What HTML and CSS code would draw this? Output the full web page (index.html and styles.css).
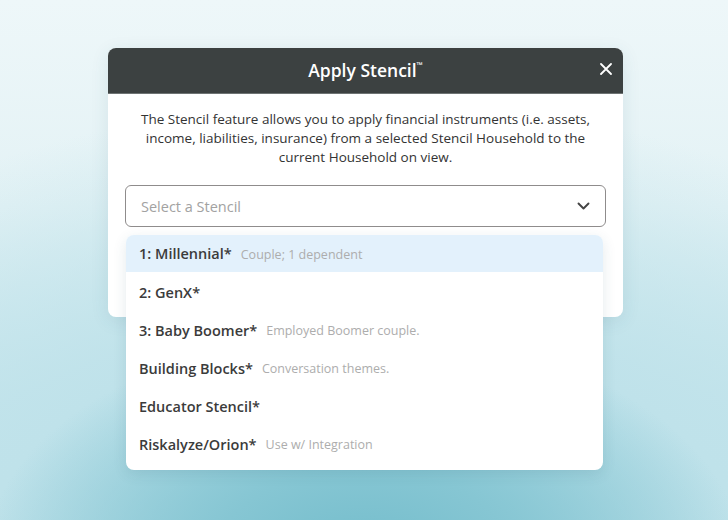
FILE: index.html
```html
<!DOCTYPE html>
<html>
<head>
<meta charset="utf-8">
<link rel="stylesheet" href="styles.css">
</head>
<body>
<div class="stage">
  <div class="modal">
    <div class="modal-header">
      <h1 class="title">Apply Stencil<sup class="tm">™</sup></h1>
      <button class="close" aria-label="Close">
        <svg width="12" height="12" viewBox="0 0 12 12"><path d="M1 1 L11 11 M11 1 L1 11" stroke="#fff" stroke-width="1.8" stroke-linecap="round"/></svg>
      </button>
    </div>
    <div class="modal-body">
      <p class="desc">The Stencil feature allows you to apply financial instruments (i.e. assets, income, liabilities, insurance) from a selected Stencil Household to the current Household on view.</p>
      <div class="select-wrap">
        <div class="select">
          <span class="placeholder">Select a Stencil</span>
          <svg class="chev" width="13" height="8" viewBox="0 0 13 8"><path d="M1.5 1.5 L6.5 6.5 L11.5 1.5" fill="none" stroke="#444" stroke-width="1.9" stroke-linecap="round" stroke-linejoin="round"/></svg>
        </div>
        <ul class="menu">
          <li class="item active"><span class="name">1: Millennial*</span><span class="note">Couple; 1 dependent</span></li>
          <li class="item"><span class="name">2: GenX*</span></li>
          <li class="item"><span class="name">3: Baby Boomer*</span><span class="note">Employed Boomer couple.</span></li>
          <li class="item"><span class="name">Building Blocks*</span><span class="note">Conversation themes.</span></li>
          <li class="item"><span class="name">Educator Stencil*</span></li>
          <li class="item"><span class="name">Riskalyze/Orion*</span><span class="note">Use w/ Integration</span></li>
        </ul>
      </div>
    </div>
  </div>
</div>
</body>
</html>
```

FILE: styles.css
```css
* { box-sizing: border-box; }
html, body {
  margin: 0;
  padding: 0;
  width: 728px;
  height: 520px;
  overflow: hidden;
}
body {
  font-family: "Open Sans", "Liberation Sans", sans-serif;
  background:
    radial-gradient(ellipse 380px 230px at 50% 108%, #72bccb 0%, #86c6d3 40%, rgba(150,207,219,0) 100%),
    radial-gradient(ellipse 760px 460px at 50% 108%, #9dd2de 0%, #bfe2ea 50%, rgba(220,240,244,0) 100%),
    linear-gradient(180deg, #eef7f9 0%, #e3f2f5 40%, #cbe8ee 75%, #bee2ea 100%);
}
.stage {
  padding: 48px 0 0 108px;
}
.modal {
  width: 515px;
  background: #fff;
  border-radius: 8px;
  box-shadow: 0 4px 18px rgba(40, 90, 110, 0.10);
}
.modal-header {
  position: relative;
  height: 46px;
  background: #3c4141;
  border-radius: 8px 8px 0 0;
  border-bottom: 1px solid #6e7373;
  display: flex;
  align-items: center;
  justify-content: center;
  padding-bottom: 2px;
}
.title {
  margin: 0;
  color: #fff;
  font-size: 17.5px;
  font-weight: 600;
}
.tm {
  font-size: 8px;
  font-weight: 700;
  vertical-align: 9px;
  line-height: 0;
}
.close {
  position: absolute;
  right: 10px;
  top: 14px;
  width: 14px;
  height: 14px;
  padding: 1px;
  border: 0;
  background: none;
  display: flex;
}
.modal-body {
  padding: 16px 17px 90px;
}
.desc {
  margin: 0 8px;
  text-align: center;
  font-size: 13.5px;
  line-height: 19px;
  color: #333;
}
.select-wrap {
  position: relative;
  margin-top: 18px;
}
.select {
  height: 42px;
  border: 1px solid #8f8c8c;
  border-radius: 6px;
  display: flex;
  align-items: center;
  justify-content: space-between;
  padding: 0 15px 0 15px;
  background: #fff;
}
.placeholder {
  font-size: 14.5px;
  color: #a2a2a2;
}
.menu {
  position: absolute;
  left: 1px;
  right: 3px;
  top: 50px;
  margin: 0;
  padding: 0 0 7px;
  list-style: none;
  background: #fff;
  border-radius: 8px;
  box-shadow: 0 4px 14px rgba(30, 80, 100, 0.12);
  overflow: hidden;
}
.item {
  height: 38px;
  display: flex;
  align-items: center;
  gap: 9px;
  padding: 0 13px;
}
.item.active {
  background: #e3f1fc;
  height: 37px;
  margin-bottom: 1px;
}
.name {
  font-size: 14.5px;
  font-weight: 600;
  color: #3b3b3b;
}
.note {
  font-size: 12.5px;
  color: #adadad;
  padding-top: 1px;
}
```
